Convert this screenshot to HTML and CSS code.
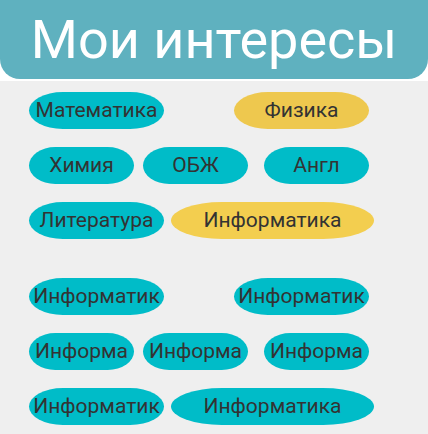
FILE: index.html
```html
<!DOCTYPE html>
<html lang="ru">
<head>
<meta charset="utf-8">
<title>Мои интересы</title>
<link rel="stylesheet" href="styles.css">
</head>
<body>
<header class="header">
  <h1 class="title">Мои интересы</h1>
</header>
<main class="content">
  <section class="group">
    <div class="row">
      <div class="chip teal w135">Математика</div>
      <div class="chip yellow w135 ml70">Физика</div>
    </div>
    <div class="row">
      <div class="chip teal w105">Химия</div>
      <div class="chip teal w105 ml9">ОБЖ</div>
      <div class="chip teal w105 ml16">Англ</div>
    </div>
    <div class="row">
      <div class="chip teal w135">Литература</div>
      <div class="chip yellow2 w203 ml7">Информатика</div>
    </div>
  </section>
  <section class="group second">
    <div class="row">
      <div class="chip teal w135">Информатика</div>
      <div class="chip teal w135 ml70">Информатика</div>
    </div>
    <div class="row">
      <div class="chip teal w105">Информатика</div>
      <div class="chip teal w105 ml9">Информатика</div>
      <div class="chip teal w105 ml16">Информатика</div>
    </div>
    <div class="row">
      <div class="chip teal w135">Информатика</div>
      <div class="chip teal w203 ml7">Информатика</div>
    </div>
  </section>
</main>
</body>
</html>
```

FILE: styles.css
```css
html, body {
  margin: 0;
  padding: 0;
}
body {
  background: #ffffff;
  font-family: Roboto, "Noto Sans", sans-serif;
  width: 428px;
  height: 434px;
  overflow: hidden;
}
.header {
  height: 79px;
  background: #5fb1bf;
  border-radius: 0 0 20px 20px;
  display: flex;
  align-items: center;
  justify-content: center;
}
.title {
  margin: 0;
  color: #ffffff;
  font-weight: 400;
  font-size: 54px;
  line-height: 1;
  padding-top: 0;
}
.content {
  margin-top: 2px;
  background: #efefef;
  height: 353px;
  padding: 11px 0 0 29px;
  box-sizing: border-box;
}
.group {
  display: flex;
  flex-direction: column;
  gap: 18px;
}
.second {
  margin-top: 39px;
}
.row {
  display: flex;
}
.chip {
  height: 37px;
  line-height: 37px;
  font-size: 21px;
  color: #333333;
  text-align: center;
  overflow: hidden;
  word-break: break-all;
  padding: 0 3px;
  box-sizing: border-box;
  border-radius: 25% / 50%;
}
.teal { background: #00bcc8; }
.yellow { background: #eec84e; }
.yellow2 { background: #f3ce4f; }
.w105 { width: 105px; }
.w135 { width: 135px; }
.w203 { width: 203px; }
.ml7 { margin-left: 7px; }
.ml9 { margin-left: 9px; }
.ml16 { margin-left: 16px; }
.ml70 { margin-left: 70px; }
```
